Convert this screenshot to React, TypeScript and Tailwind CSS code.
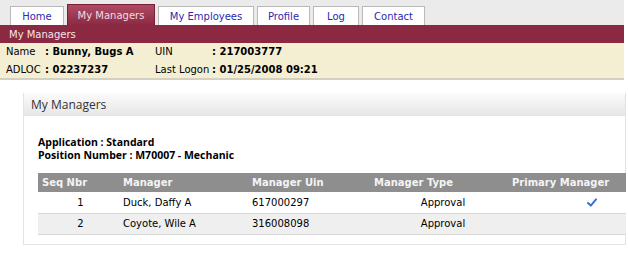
const tabs = [
  { label: "Home", w: "w-[54px]" },
  { label: "My Managers", w: "w-[88px]" },
  { label: "My Employees", w: "w-[96px]" },
  { label: "Profile", w: "w-[53px]" },
  { label: "Log", w: "w-[46px]" },
  { label: "Contact", w: "w-[63px]" },
];

const managers = [
  { seq: "1", name: "Duck, Daffy A", uin: "617000297", type: "Approval", primary: true },
  { seq: "2", name: "Coyote, Wile A", uin: "316008098", type: "Approval", primary: false },
];

function Check() {
  return (
    <svg width="10" height="9" viewBox="0 0 10 9" className="inline-block">
      <path d="M1 5 L3.8 7.6 L9 1.4" fill="none" stroke="#3b6fd6" strokeWidth="2" strokeLinecap="round" strokeLinejoin="round" />
    </svg>
  );
}

export default function App() {
  return (
    <div className="h-[264px] w-[628px] overflow-hidden bg-white text-[10px] text-black" style={{ fontFamily: '"DejaVu Sans", Verdana, sans-serif' }}>
      <div className="w-[624px]">
        {/* tab strip */}
        <div className="flex h-[25px] items-end gap-[3px] bg-[#ebebeb] pl-[10px]">
          {tabs.map((t) =>
            t.label === "My Managers" ? (
              <div
                key={t.label}
                className={`flex h-[21px] ${t.w} items-center justify-center border border-b-0 border-[#7a1f36] bg-gradient-to-b from-[#b04a64] to-[#8c2a43] text-[#f0dde3]`}
              >
                {t.label}
              </div>
            ) : (
              <div
                key={t.label}
                className={`flex h-[19px] ${t.w} items-center justify-center border border-b-0 border-[#b9b9b9] bg-white text-[#2a2ab0]`}
              >
                {t.label}
              </div>
            )
          )}
        </div>
        {/* title bar */}
        <div className="flex h-[18px] items-center bg-[#8b2942] pl-[9px] text-[#f3e6ea]">My Managers</div>
        {/* info */}
        <div className="flex h-[37px] flex-col justify-center gap-[3px] whitespace-nowrap border-b-2 border-[#d3d0bf] bg-[#f4efd3] pl-[6px] leading-[15px]">
          <div className="flex">
            <span className="w-[39px] shrink-0">Name</span>
            <span className="w-[110px] shrink-0 font-bold">: Bunny, Bugs A</span>
            <span className="w-[57px] shrink-0">UIN</span>
            <span className="font-bold">: 217003777</span>
          </div>
          <div className="flex">
            <span className="w-[39px] shrink-0">ADLOC</span>
            <span className="w-[110px] shrink-0 font-bold">: 02237237</span>
            <span className="w-[57px] shrink-0">Last Logon</span>
            <span className="font-bold">: 01/25/2008 09:21</span>
          </div>
        </div>
      </div>

      {/* panel */}
      <div className="ml-[23px] mt-[13px] w-[603px] border border-t-0 border-[#e3e3e3]">
        <div
          className="flex h-[23px] items-center bg-gradient-to-b from-[#fbfbfb] to-[#e6e6e6] pl-[7px] text-[12px] text-[#333]"
          style={{ fontFamily: '"Open Sans", Tahoma, sans-serif' }}
        >
          My Managers
        </div>
        <div className="pb-[9px] pl-[14px] pt-[20px]">
          <div className="text-[10.5px] font-bold leading-[13px]" style={{ fontFamily: '"Open Sans", Tahoma, sans-serif' }}>
            <div>Application : Standard</div>
            <div>Position Number : M70007 - Mechanic</div>
          </div>
          <table className="mt-[11px] w-[588px] border-collapse">
            <thead>
              <tr className="h-[19px] bg-[#8e8e8e] text-left font-bold text-[#f4f4f4]">
                <th className="w-[85px] pl-[4px] font-bold">Seq Nbr</th>
                <th className="w-[129px] font-bold">Manager</th>
                <th className="w-[122px] font-bold">Manager Uin</th>
                <th className="w-[138px] font-bold">Manager Type</th>
                <th className="font-bold">Primary Manager</th>
              </tr>
            </thead>
            <tbody>
              {managers.map((m, i) => (
                <tr key={m.seq} className={`h-[21px] border-b border-[#d8d8d8] ${i % 2 ? "bg-[#efefef]" : "bg-white"}`}>
                  <td className="text-center">{m.seq}</td>
                  <td>{m.name}</td>
                  <td>{m.uin}</td>
                  <td className="text-center">{m.type}</td>
                  <td className="pl-[75px]">{m.primary ? <Check /> : null}</td>
                </tr>
              ))}
            </tbody>
          </table>
        </div>
      </div>
    </div>
  );
}
